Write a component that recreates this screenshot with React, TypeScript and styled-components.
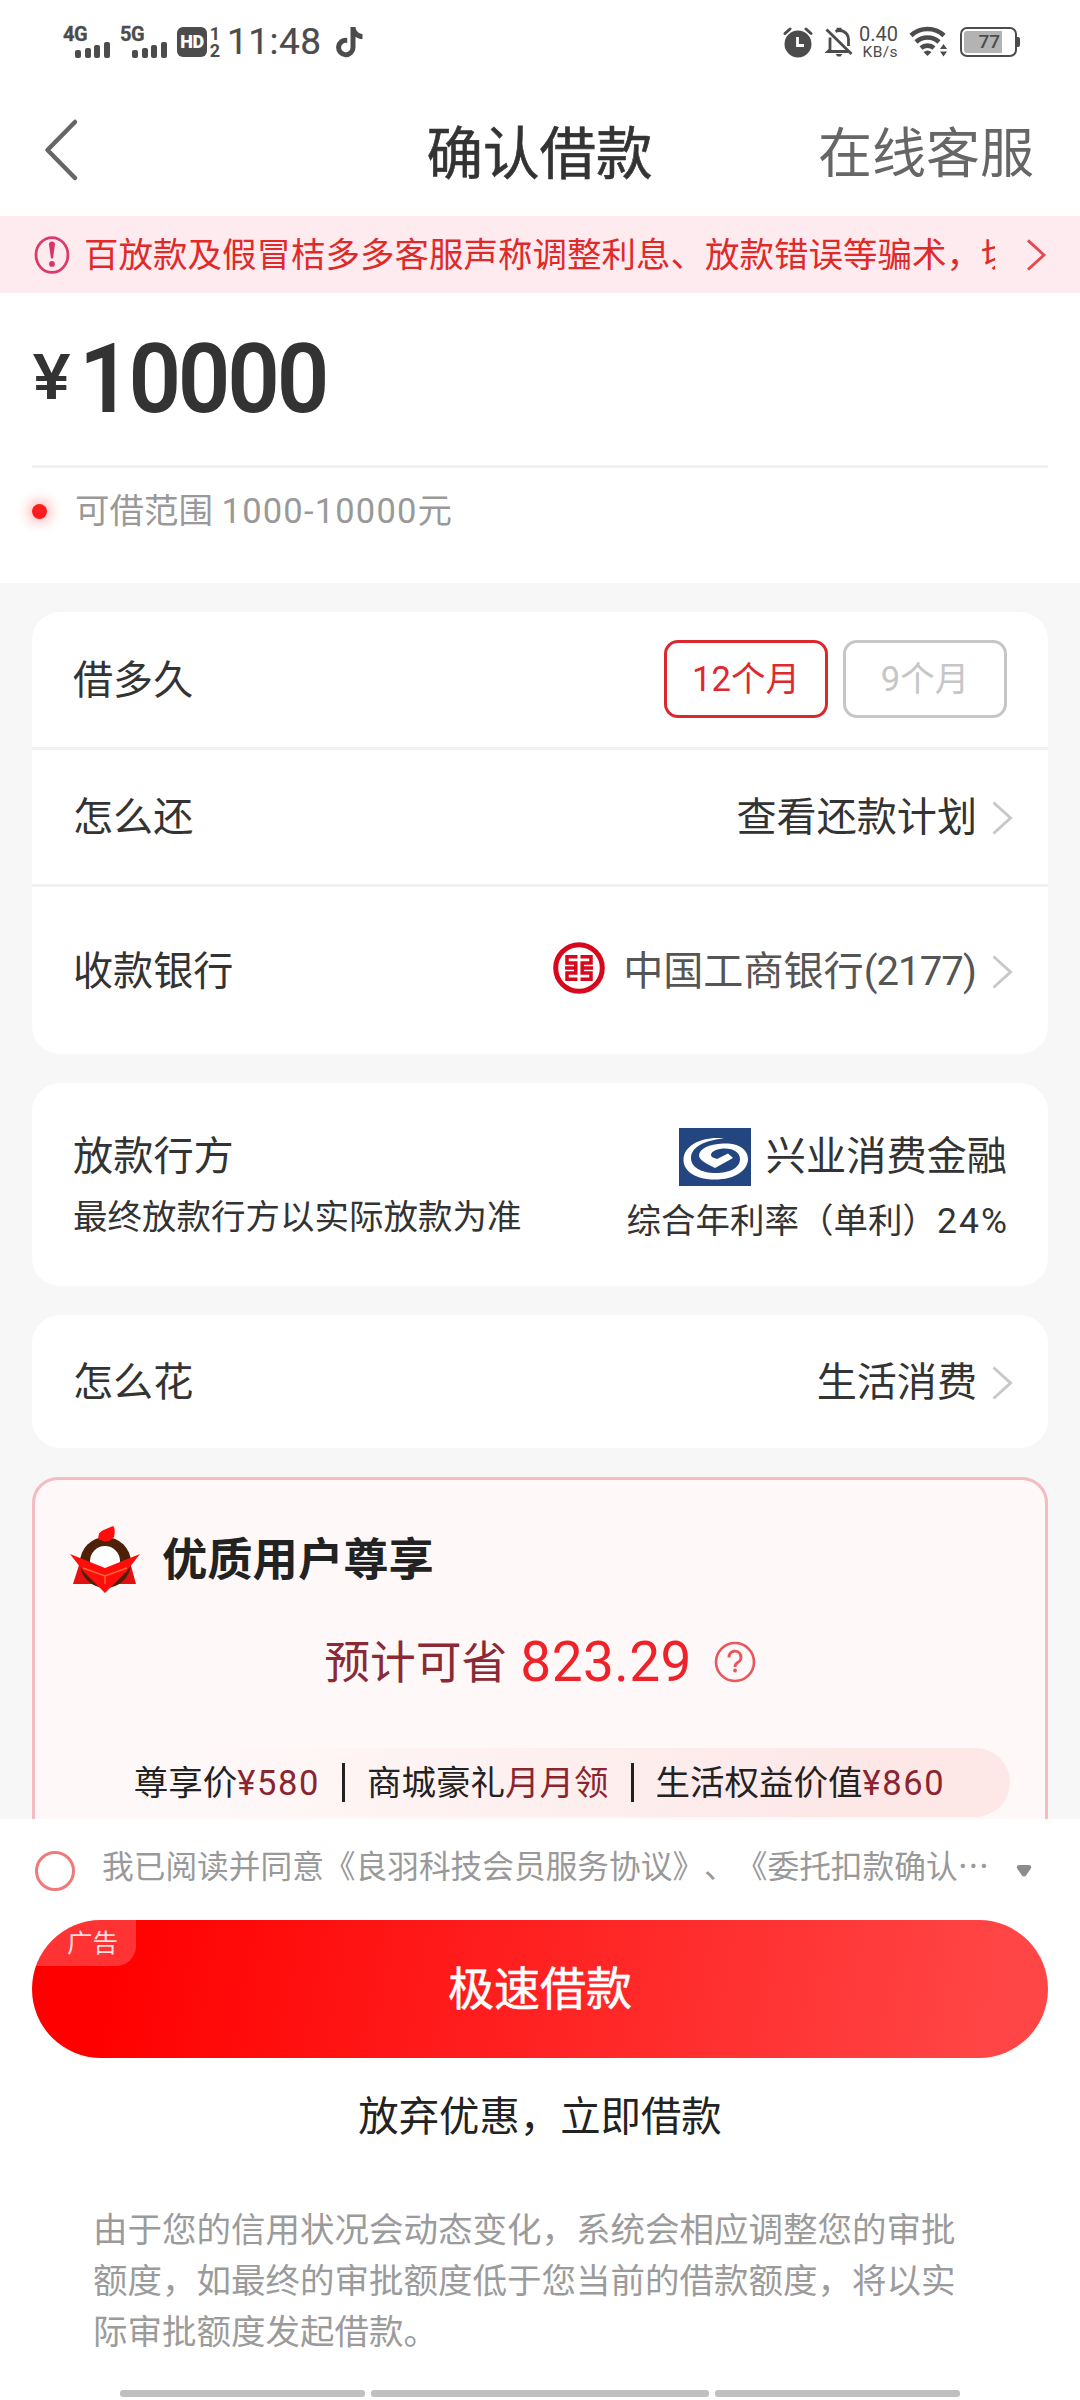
import React from "react";
import styled, { createGlobalStyle } from "styled-components";

const GlobalStyle = createGlobalStyle`
  * { box-sizing: border-box; }
  body { margin: 0; background: #fff; }
`;

const Screen = styled.div`
  width: 1080px;
  height: 2400px;
  overflow: hidden;
  display: flex;
  flex-direction: column;
  background: #fff;
  color: #333;
  font-family: Roboto, "Noto Sans CJK SC", sans-serif;
  white-space: nowrap;
  text-spacing-trim: space-all;
`;

/* ---------- status bar ---------- */

const StatusBar = styled.div`
  height: 84px;
  padding: 0 60px 0 63px;
  display: flex;
  align-items: center;
  justify-content: space-between;
  color: #4c4c4c;
`;

const StatusGroup = styled.div`
  display: flex;
  align-items: center;
`;

const Signal = styled.div`
  width: 57px;
  height: 32px;
  display: grid;
  grid-template: 32px / 47px;
  & > * { grid-area: 1 / 1; }
`;

const Generation = styled.span`
  font: 700 20px/16px Roboto, sans-serif;
  letter-spacing: -0.4px;
  -webkit-text-stroke: 0.3px #4c4c4c;
`;

const Bars = styled.div`
  display: flex;
  align-items: flex-end;
  justify-content: flex-end;
  gap: 3.6px;
`;

const Bar = styled.i<{ $h: number }>`
  width: 6px;
  height: ${(p) => p.$h}px;
  border-radius: 2px;
  background: #4c4c4c;
`;

const HdBox = styled.div`
  width: 30px;
  height: 30px;
  border-radius: 6px;
  background: #4c4c4c;
  color: #fff;
  display: flex;
  align-items: center;
  justify-content: center;
  font: 900 18px/30px Roboto, sans-serif;
  letter-spacing: -0.3px;
`;

const SimNumbers = styled.div`
  width: 14px;
  padding-left: 2px;
  display: flex;
  flex-direction: column;
  align-items: center;
  font: 700 18px/17px Roboto, sans-serif;
`;

const Clock = styled.span`
  margin-left: 6px;
  width: 109px;
  font: 400 37px/44px Roboto, sans-serif;
  letter-spacing: 0.5px;
  -webkit-text-stroke: 0.2px #4c4c4c;
`;

const NetSpeed = styled.div`
  margin: 0 11px 0 5px;
  width: 40px;
  display: flex;
  flex-direction: column;
  align-items: flex-end;
`;

const SpeedValue = styled.span`
  font: 400 20px/20px Roboto, sans-serif;
`;

const SpeedUnit = styled.span`
  font: 400 15.5px/16px Roboto, sans-serif;
  letter-spacing: 0.4px;
`;

const Battery = styled.div`
  width: 57px;
  height: 30px;
  padding: 2px;
  margin-left: 11px;
  border: 2.5px solid #4c4c4c;
  border-radius: 7px;
  display: flex;
`;

const BatteryLevel = styled.div`
  width: 38px;
  background: #b3b3b3;
  border-radius: 3px 0 0 3px;
  padding-right: 2px;
  text-align: right;
  font: 500 19px/22px Roboto, sans-serif;
`;

const BatteryCap = styled.i`
  width: 3px;
  height: 10px;
  border-radius: 0 2px 2px 0;
  background: #4c4c4c;
`;

/* ---------- header ---------- */

const Header = styled.header`
  height: 132px;
  padding: 0 46px 0 43px;
  display: grid;
  grid-template-columns: 1fr auto 1fr;
  align-items: center;
`;

const Title = styled.h1`
  margin: 9px 0 0 2px;
  font-size: 56.5px;
  line-height: 70px;
  font-weight: 400;
  -webkit-text-stroke: 0.6px #333;
`;

const ServiceLink = styled.a`
  justify-self: end;
  margin-top: 9px;
  font-size: 54px;
  line-height: 70px;
  color: #666;
`;

/* ---------- notice ---------- */

const Notice = styled.div`
  height: 77px;
  padding: 0 33px 0 34px;
  display: flex;
  align-items: center;
  background: #feebef;
`;

const NoticeText = styled.div`
  width: 913px;
  margin: 1px 30px 0 14px;
  overflow: hidden;
  font-size: 34.5px;
  line-height: 50px;
  color: #e02a2a;
`;

/* ---------- amount ---------- */

const AmountPanel = styled.section`
  height: 290px;
  padding: 0 32px;
`;

const Amount = styled.div`
  height: 172px;
  display: flex;
  align-items: center;
`;

const Currency = styled.span`
  width: 47px;
  margin-top: -4px;
  font-family: Inter, sans-serif;
  font-size: 62px;
  line-height: 64px;
  font-weight: 600;
  transform: scaleX(1.12);
  transform-origin: left;
`;

const AmountValue = styled.span`
  font-size: 97px;
  line-height: 110px;
  font-weight: 600;
  letter-spacing: -3.4px;
  transform: scaleX(0.95);
  transform-origin: left;
`;

const Divider = styled.div`
  height: 3px;
  background: #f1f1f1;
`;

const Range = styled.div`
  padding-top: 20px;
  display: flex;
  align-items: center;
  gap: 28px;
  font-size: 34.5px;
  line-height: 46px;
  color: #999;
`;

const Dot = styled.i`
  width: 15px;
  height: 15px;
  border-radius: 50%;
  background: #fc1c1c;
  box-shadow: 0 0 14px 2px rgba(252, 28, 28, 0.45);
`;

const Digits = styled.span<{ $gap: number }>`
  letter-spacing: ${(p) => p.$gap}px;
`;

/* ---------- cards ---------- */

const Body = styled.main`
  height: 1236px;
  padding: 29px 32px 0;
  display: flex;
  flex-direction: column;
  gap: 29px;
  overflow: hidden;
  background: #f7f7f7;
`;

const Card = styled.section`
  flex: none;
  border-radius: 28px;
  background: #fff;
`;

const Row = styled.div<{ $h: number }>`
  height: ${(p) => p.$h}px;
  padding: 2px 35px 0 41px;
  display: flex;
  align-items: center;
  justify-content: space-between;
  font-size: 40.1px;
  line-height: 56px;
`;

const Value = styled.div<{ $muted?: boolean }>`
  display: flex;
  align-items: center;
  color: ${(p) => (p.$muted ? "#555" : "#333")};
`;

const Terms = styled.div`
  margin: -4px 6px 0 0;
  display: flex;
  gap: 15px;
`;

const Term = styled.button<{ $active?: boolean }>`
  width: 164px;
  height: 78px;
  padding: 0;
  border: 3px solid ${(p) => (p.$active ? "#d9292e" : "#c6c6c6")};
  border-radius: 14px;
  background: #fff;
  color: ${(p) => (p.$active ? "#e0292e" : "#c6c6c6")};
  font-family: inherit;
  font-size: 34.5px;
  line-height: 60px;
`;

const LenderRow = styled.div`
  height: 203px;
  padding: 44px 41px 0 41px;
  display: flex;
  justify-content: space-between;
`;

const LenderColumn = styled.div<{ $end?: boolean }>`
  display: flex;
  flex-direction: column;
  align-items: ${(p) => (p.$end ? "flex-end" : "flex-start")};
`;

const LenderName = styled.div`
  height: 60px;
  display: flex;
  align-items: center;
  gap: 15px;
  font-size: 40.2px;
  line-height: 60px;
`;

const LenderNote = styled.div<{ $h: number }>`
  font-size: 34.5px;
  line-height: ${(p) => p.$h}px;
`;

const Rate = styled.span`
  margin-right: -2px;
  font-size: 35.5px;
  letter-spacing: 2px;
`;

/* ---------- promo ---------- */

const Promo = styled.section`
  flex: none;
  height: 420px;
  padding: 43px 35px 0;
  border: 3px solid #f4bcc1;
  border-radius: 26px;
  background: #fff8f8;
  display: flex;
  flex-direction: column;
`;

const PromoHead = styled.div`
  height: 74px;
  display: flex;
  align-items: center;
  gap: 22px;
  font-size: 45.3px;
  line-height: 60px;
  font-weight: 700;
  color: #222;
`;

const PromoTitle = styled.span`
  margin-top: 2px;
`;

const Saving = styled.div`
  margin-top: 33px;
  height: 64px;
  display: flex;
  align-items: center;
  justify-content: center;
  font-size: 45.8px;
  line-height: 60px;
  color: #8a2a34;
`;

const SavingLabel = styled.span`
  margin-top: 3px;
`;

const SavingValue = styled.span`
  margin: 0 22px 0 13px;
  font-size: 55px;
  letter-spacing: 0.4px;
  color: #ee2229;
`;

const Perks = styled.div`
  margin-top: 54px;
  height: 69px;
  padding-right: 1px;
  display: flex;
  align-items: center;
  justify-content: center;
  gap: 22px;
  border-radius: 35px;
  background: linear-gradient(100deg, rgba(253, 232, 232, 0) 15%, #fde7e7 85%);
  font-size: 34.5px;
  line-height: 50px;
  color: #222;
`;

const Accent = styled.span<{ $gap?: number }>`
  color: #8a2530;
  letter-spacing: ${(p) => p.$gap ?? 0}px;
`;

const PerkLine = styled.i`
  width: 3px;
  height: 39px;
  background: #222;
`;

/* ---------- footer ---------- */

const Footer = styled.footer`
  height: 581px;
  padding: 0 32px;
  display: flex;
  flex-direction: column;
  background: #fff;
`;

const Agreement = styled.div`
  height: 101px;
  padding: 3px 16px 0 3px;
  display: flex;
  align-items: center;
  color: #999;
`;

const Radio = styled.i`
  width: 40px;
  height: 40px;
  border: 3px solid #f07a7a;
  border-radius: 50%;
`;

const AgreementText = styled.span`
  margin: -14px auto 0 27px;
  font-family: "Noto Sans CJK SC", sans-serif;
  font-size: 31.7px;
  line-height: 44px;
`;

const Submit = styled.button`
  position: relative;
  flex: none;
  height: 138px;
  padding: 0 0 8px;
  border: 0;
  border-radius: 69px;
  overflow: hidden;
  background: linear-gradient(100deg, #ff0000 8%, #ff4646 95%);
  color: #fff;
  font-family: inherit;
  font-size: 46px;
  -webkit-text-stroke: 0.5px #fff;
`;

const AdBadge = styled.span`
  position: absolute;
  left: 0;
  top: 0;
  width: 104px;
  height: 46px;
  padding-left: 35px;
  border-radius: 0 0 20px 0;
  background: rgba(255, 255, 255, 0.2);
  color: rgba(255, 255, 255, 0.85);
  text-align: left;
  font-size: 25.5px;
  line-height: 46px;
  -webkit-text-stroke: 0;
`;

const Skip = styled.a`
  height: 120px;
  text-align: center;
  font-size: 40.4px;
  line-height: 120px;
  color: #222;
`;

const Disclaimer = styled.p`
  height: 208px;
  margin: 0;
  padding: 27px 0 0 61px;
  font-size: 34.5px;
  line-height: 51px;
  color: #9b9b9b;
`;

const NavBars = styled.div`
  display: grid;
  grid-template-columns: 245px 338px 245px;
  gap: 6px;
  padding: 4px 0 0 88px;
`;

const NavBar = styled.i`
  height: 7px;
  border-radius: 3px;
  background: #bfbfbf;
`;

/* ---------- drawings ---------- */

const NoteIcon = () => (
  <svg width="28" height="32" viewBox="0 0 28 32" fill="#4c4c4c">
    <path d="M14.5 1h5c.3 4 3 6.600 7 7v5c-2.600 0-5-.8-7-2.300V21.500a9.700 9.700 0 1 1-8.300-9.600v5.100a4.700 4.700 0 1 0 3.300 4.500z" />
  </svg>
);

const AlarmIcon = () => (
  <svg width="30" height="32" viewBox="0 0 30 32">
    <circle cx="15" cy="18" r="13.500" fill="#4c4c4c" />
    <path d="M2 7.500 7 3M28 7.500 23 3" stroke="#4c4c4c" strokeWidth="3" strokeLinecap="round" />
    <path d="M14.500 11v8.500H21" stroke="#fff" strokeWidth="2.800" fill="none" />
  </svg>
);

const MuteIcon = () => (
  <svg width="28" height="32" viewBox="0 0 28 32" fill="none" stroke="#4c4c4c" strokeWidth="2.800">
    <path d="M1.500 3.500 26.500 28" />
    <path d="M5 11.500V23.500l-2 2h20M10.500 5.500a9 9 0 0 1 13 7.500v7" />
    <path d="M11.500 3.500h5" strokeWidth="3.500" />
    <path d="M10.500 28h7l-2 2.500h-3z" fill="#4c4c4c" stroke="none" />
  </svg>
);

const WifiIcon = () => (
  <svg width="40" height="32" viewBox="0 0 40 32" fill="none" stroke="#4c4c4c" strokeWidth="4.600">
    <path d="M2 9.500a24 24 0 0 1 33 0" />
    <path d="M7 16a17 17 0 0 1 23 0" />
    <path d="M12 22a10 10 0 0 1 13 0" />
    <path d="M14.500 26q4-3 8 0L18.500 30z" fill="#4c4c4c" stroke="none" />
    <path d="M31 23l3.500-5 3.500 5zM31 25.500l3.500 5 3.500-5z" fill="#4c4c4c" stroke="none" />
  </svg>
);

const BackIcon = () => (
  <svg width="36" height="64" viewBox="0 0 36 64" fill="none" stroke="#666" strokeWidth="4.500" strokeLinecap="round" strokeLinejoin="round">
    <path d="M32 4 4.500 32 32 60" />
  </svg>
);

const WarnIcon = () => (
  <svg width="36" height="40" viewBox="0 0 36 40" fill="none">
    <ellipse cx="18" cy="20" rx="16" ry="17.500" stroke="#dc3a6a" strokeWidth="2.800" />
    <path d="M15 9.500a3 3 0 0 1 6 0L19 23.500h-2z" fill="#d6346a" />
    <circle cx="18" cy="29" r="2.900" fill="#d6346a" />
  </svg>
);

const Chevron = ({ color = "#c8c8c8", height = 34, gap = 0 }: { color?: string; height?: number; gap?: number }) => (
  <svg width={22 + gap} height={height} viewBox={`${-gap} 0 ${22 + gap} 34`} fill="none" stroke={color} strokeWidth="3">
    <path d="M2.500 1.500 19.500 17 2.500 32.500" />
  </svg>
);

const IcbcLogo = () => (
  <svg width="52" height="60" viewBox="0 0 52 60" fill="none" stroke="#d7081c">
    <circle cx="26" cy="26" r="23.300" strokeWidth="5" />
    <g strokeWidth="3.500">
      <path d="M24.500 14.700H14v6.300h8.800V31H14v6.300h10.500M22.800 26H12" />
      <path d="M27.500 14.700H38v6.300h-8.800V31H38v6.300H27.500M29.200 26H40" />
    </g>
  </svg>
);

const CibLogo = () => (
  <svg width="72" height="58" viewBox="0 0 72 58">
    <rect width="72" height="58" fill="#234680" />
    <path
      d="M45 10.500C24 8 4.500 17 4.500 32 4.500 44 18 51.500 36 51.500 55 51.500 69 43 69 31 69 20 57 14.500 44 15.500 30 16 20 21 20 27.500 20 32 28 36 36 40L54 30 49 25.500 38 31C35 30 32 29 32 27 32 23 39 20.500 46 20.500 55 20.500 61 25 61 31 61 40 50 45 37 45 22 45 12 39 12 30 12 19 26 12 45 10.500z"
      fill="#fff"
    />
  </svg>
);

const MemberLogo = () => (
  <svg width="70" height="68" viewBox="0 0 70 68">
    <path d="M10 36 3 58H66L60 36z" fill="#e60f12" />
    <circle cx="35.500" cy="36.500" r="25.500" fill="#4f2008" />
    <circle cx="35" cy="35" r="15" fill="#fff" />
    <path d="M0 28 35 42 70 28 56 46 35 67 14 46z" fill="#ff0d0d" />
    <path d="M13 42 35 50 57 42M35 50V58" stroke="#ff6a30" strokeWidth="1.500" fill="none" />
    <path d="M28 13Q28 5 36 3l7-3q3 3 1 11-5 6-11 4z" fill="#ff0d0d" />
  </svg>
);

const HelpIcon = () => (
  <svg width="42" height="42" viewBox="0 0 42 42" fill="none" stroke="#e8575b" strokeWidth="2.600">
    <circle cx="21" cy="21" r="19" />
    <path d="M15 16.500a6 6 0 1 1 8.700 5c-2.100 1.300-2.700 2.500-2.700 4.500" strokeWidth="3" />
    <circle cx="21" cy="29.500" r="1.900" fill="#e8575b" stroke="none" />
  </svg>
);

const DropIcon = () => (
  <svg width="16" height="14" viewBox="0 0 16 14">
    <path d="M3 1h10q3.500 1 1.500 4L10 11.500q-2 2-4 0L1.500 5Q-.5 2 3 1z" fill="#8c8c8c" />
  </svg>
);

const SignalMark = ({ label }: { label: string }) => (
  <Signal>
    <Generation>{label}</Generation>
    <Bars>
      {[8, 10, 13, 16].map((h) => (
        <Bar key={h} $h={h} />
      ))}
    </Bars>
  </Signal>
);

export default function App() {
  return (
    <Screen lang="zh-CN">
      <GlobalStyle />
      <StatusBar>
        <StatusGroup>
          <SignalMark label="4G" />
          <SignalMark label="5G" />
          <HdBox>HD</HdBox>
          <SimNumbers>
            <span>1</span>
            <span>2</span>
          </SimNumbers>
          <Clock>11:48</Clock>
          <NoteIcon />
        </StatusGroup>
        <StatusGroup>
          <AlarmIcon />
          <svg width="12" height="1" />
          <MuteIcon />
          <NetSpeed>
            <SpeedValue>0.40</SpeedValue>
            <SpeedUnit>KB/s</SpeedUnit>
          </NetSpeed>
          <WifiIcon />
          <Battery>
            <BatteryLevel>77</BatteryLevel>
          </Battery>
          <BatteryCap />
        </StatusGroup>
      </StatusBar>

      <Header>
        <BackIcon />
        <Title>确认借款</Title>
        <ServiceLink>在线客服</ServiceLink>
      </Header>

      <Notice>
        <WarnIcon />
        <NoticeText>百放款及假冒桔多多客服声称调整利息、放款错误等骗术，切</NoticeText>
        <Chevron color="#e8484c" height={32} />
      </Notice>

      <AmountPanel>
        <Amount>
          <Currency>¥</Currency>
          <AmountValue>10000</AmountValue>
        </Amount>
        <Divider />
        <Range>
          <Dot />
          <span>
            可借范围 <Digits $gap={1.2}>1000-10000</Digits>元
          </span>
        </Range>
      </AmountPanel>

      <Body>
        <Card>
          <Row $h={135}>
            <span>借多久</span>
            <Terms>
              <Term $active>12个月</Term>
              <Term>9个月</Term>
            </Terms>
          </Row>
          <Divider />
          <Row $h={134}>
            <span>怎么还</span>
            <Value>
              查看还款计划
              <Chevron gap={14} />
            </Value>
          </Row>
          <Divider />
          <Row $h={167}>
            <span>收款银行</span>
            <Value $muted>
              <IcbcLogo />
              <svg width="18" height="1" />
              <span>
                中国工商银行<Digits $gap={-0.9}>(2177)</Digits>
              </span>
              <Chevron gap={15} />
            </Value>
          </Row>
        </Card>

        <Card>
          <LenderRow>
            <LenderColumn>
              <LenderName>放款行方</LenderName>
              <LenderNote $h={60}>最终放款行方以实际放款为准</LenderNote>
            </LenderColumn>
            <LenderColumn $end>
              <LenderName>
                <CibLogo />
                兴业消费金融
              </LenderName>
              <LenderNote $h={68}>
                综合年利率（单利）<Rate>24%</Rate>
              </LenderNote>
            </LenderColumn>
          </LenderRow>
        </Card>

        <Card>
          <Row $h={133}>
            <span>怎么花</span>
            <Value>
              生活消费
              <Chevron gap={14} />
            </Value>
          </Row>
        </Card>

        <Promo>
          <PromoHead>
            <MemberLogo />
            <PromoTitle>优质用户尊享</PromoTitle>
          </PromoHead>
          <Saving>
            <SavingLabel>预计可省</SavingLabel>
            <SavingValue>823.29</SavingValue>
            <HelpIcon />
          </Saving>
          <Perks>
            <span>
              尊享价<Accent $gap={1.6}>¥580</Accent>
            </span>
            <PerkLine />
            <span>
              商城豪礼<Accent>月月领</Accent>
            </span>
            <PerkLine />
            <span>
              生活权益价值<Accent $gap={1.6}>¥860</Accent>
            </span>
          </Perks>
        </Promo>
      </Body>

      <Footer>
        <Agreement>
          <Radio />
          <AgreementText>我已阅读并同意《良羽科技会员服务协议》、《委托扣款确认…</AgreementText>
          <DropIcon />
        </Agreement>
        <Submit>
          <AdBadge>广告</AdBadge>
          极速借款
        </Submit>
        <Skip>放弃优惠，立即借款</Skip>
        <Disclaimer>
          由于您的信用状况会动态变化，系统会相应调整您的审批
          <br />
          额度，如最终的审批额度低于您当前的借款额度，将以实
          <br />
          际审批额度发起借款。
        </Disclaimer>
        <NavBars>
          <NavBar />
          <NavBar />
          <NavBar />
        </NavBars>
      </Footer>
    </Screen>
  );
}
